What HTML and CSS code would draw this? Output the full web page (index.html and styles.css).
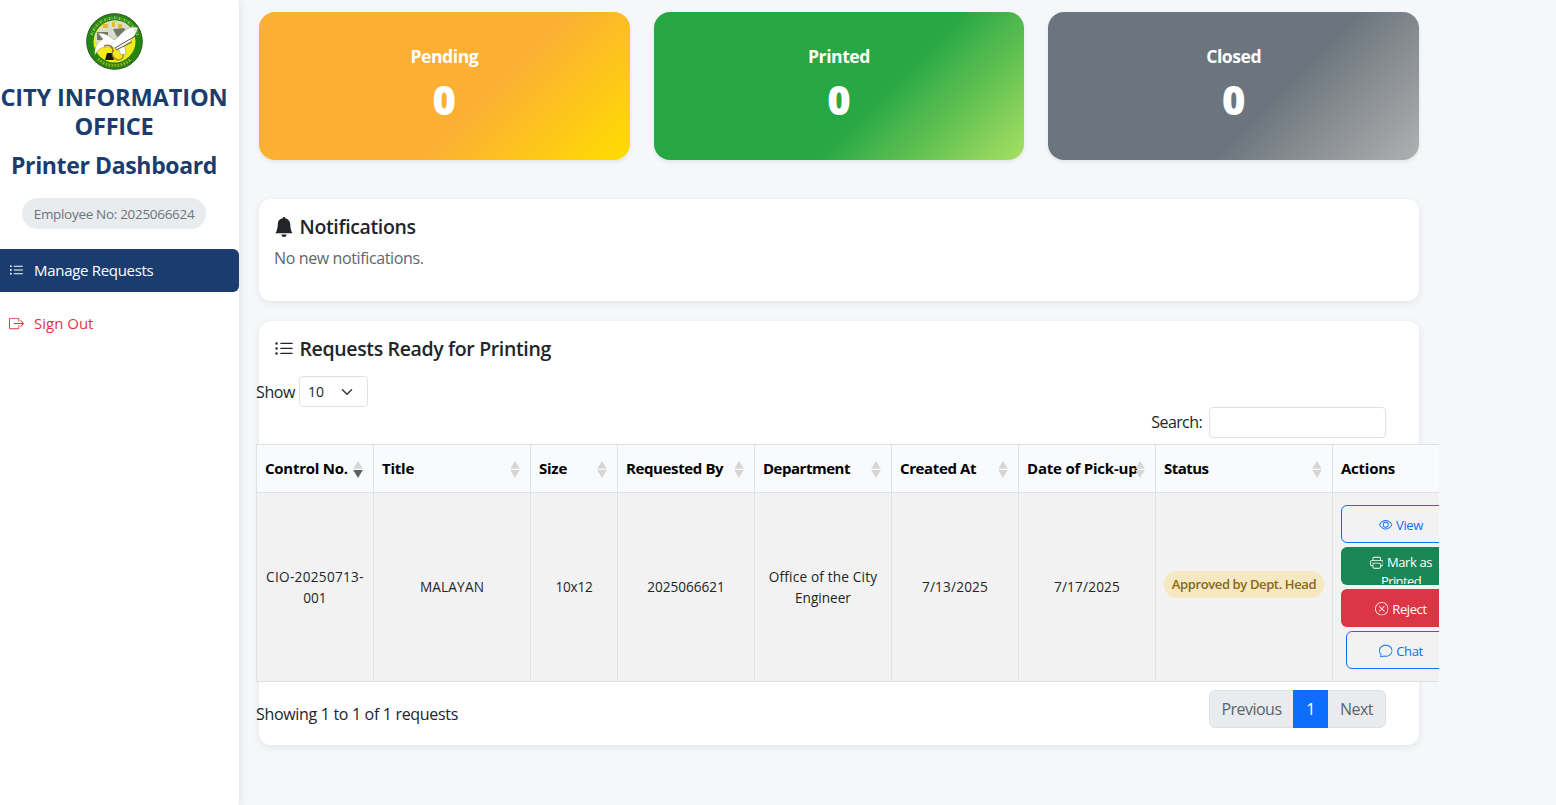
FILE: index.html
```html
<!DOCTYPE html>
<html lang="en">
<head>
<meta charset="utf-8">
<title>Printer Dashboard</title>
<link rel="stylesheet" href="styles.css">
</head>
<body>
<svg class="sprite" aria-hidden="true">
  <symbol id="list" viewBox="0 0 16 16"><path fill-rule="evenodd" d="M5 11.5a.5.5 0 0 1 .5-.5h9a.5.5 0 0 1 0 1h-9a.5.5 0 0 1-.5-.5m0-4a.5.5 0 0 1 .5-.5h9a.5.5 0 0 1 0 1h-9a.5.5 0 0 1-.5-.5m0-4a.5.5 0 0 1 .5-.5h9a.5.5 0 0 1 0 1h-9a.5.5 0 0 1-.5-.5m-3 1a1 1 0 1 0 0-2 1 1 0 0 0 0 2m0 4a1 1 0 1 0 0-2 1 1 0 0 0 0 2m0 4a1 1 0 1 0 0-2 1 1 0 0 0 0 2"/></symbol>
  <symbol id="exit" viewBox="0 0 16 16"><path fill-rule="evenodd" d="M10 12.5a.5.5 0 0 1-.5.5h-8a.5.5 0 0 1-.5-.5v-9a.5.5 0 0 1 .5-.5h8a.5.5 0 0 1 .5.5v2a.5.5 0 0 0 1 0v-2A1.5 1.5 0 0 0 9.5 2h-8A1.5 1.5 0 0 0 0 3.5v9A1.5 1.5 0 0 0 1.5 14h8a1.5 1.5 0 0 0 1.5-1.5v-2a.5.5 0 0 0-1 0z"/><path fill-rule="evenodd" d="M15.854 8.354a.5.5 0 0 0 0-.708l-3-3a.5.5 0 0 0-.708.708L14.293 7.5H5.5a.5.5 0 0 0 0 1h8.793l-2.147 2.146a.5.5 0 0 0 .708.708z"/></symbol>
  <symbol id="bell" viewBox="0 0 16 16"><path d="M8 16a2 2 0 0 0 2-2H6a2 2 0 0 0 2 2m.995-14.901a1 1 0 1 0-1.99 0A5 5 0 0 0 3 6c0 1.098-.5 6-2 7h14c-1.5-1-2-5.902-2-7 0-2.42-1.72-4.44-4.005-4.901"/></symbol>
  <symbol id="eye" viewBox="0 0 16 16"><path d="M16 8s-3-5.5-8-5.5S0 8 0 8s3 5.5 8 5.5S16 8 16 8M1.173 8a13 13 0 0 1 1.66-2.043C4.12 4.668 5.88 3.5 8 3.5s3.879 1.168 5.168 2.457A13 13 0 0 1 14.828 8q-.086.13-.195.288c-.335.48-.83 1.12-1.465 1.755C11.879 11.332 10.119 12.5 8 12.5s-3.879-1.168-5.168-2.457A13 13 0 0 1 1.172 8z"/><path d="M8 5.5a2.5 2.5 0 1 0 0 5 2.5 2.5 0 0 0 0-5M4.5 8a3.5 3.5 0 1 1 7 0 3.5 3.5 0 0 1-7 0"/></symbol>
  <symbol id="printer" viewBox="0 0 16 16"><path d="M2.5 8a.5.5 0 1 0 0-1 .5.5 0 0 0 0 1"/><path d="M5 1a2 2 0 0 0-2 2v2H2a2 2 0 0 0-2 2v3a2 2 0 0 0 2 2h1v1a2 2 0 0 0 2 2h6a2 2 0 0 0 2-2v-1h1a2 2 0 0 0 2-2V7a2 2 0 0 0-2-2h-1V3a2 2 0 0 0-2-2zM4 3a1 1 0 0 1 1-1h6a1 1 0 0 1 1 1v2H4zm1 5a2 2 0 0 0-2 2v1H2a1 1 0 0 1-1-1V7a1 1 0 0 1 1-1h12a1 1 0 0 1 1 1v3a1 1 0 0 1-1 1h-1v-1a2 2 0 0 0-2-2zm7 2v3a1 1 0 0 1-1 1H5a1 1 0 0 1-1-1v-3a1 1 0 0 1 1-1h6a1 1 0 0 1 1 1"/></symbol>
  <symbol id="reject" viewBox="0 0 16 16"><path d="M8 15A7 7 0 1 1 8 1a7 7 0 0 1 0 14m0 1A8 8 0 1 0 8 0a8 8 0 0 0 0 16"/><path d="M4.646 4.646a.5.5 0 0 1 .708 0L8 7.293l2.646-2.647a.5.5 0 0 1 .708.708L8.707 8l2.647 2.646a.5.5 0 0 1-.708.708L8 8.707l-2.646 2.647a.5.5 0 0 1-.708-.708L7.293 8 4.646 5.354a.5.5 0 0 1 0-.708"/></symbol>
  <symbol id="chat" viewBox="0 0 16 16"><path d="M2.678 11.894a1 1 0 0 1 .287.801 11 11 0 0 1-.398 2c1.395-.323 2.247-.697 2.634-.893a1 1 0 0 1 .71-.074A8 8 0 0 0 8 14c3.996 0 7-2.807 7-6s-3.004-6-7-6-7 2.808-7 6c0 1.468.617 2.83 1.678 3.894m-.493 3.905a22 22 0 0 1-.713.129c-.2.032-.352-.176-.273-.362a10 10 0 0 0 .244-.637l.003-.01c.248-.72.45-1.548.524-2.319C.743 11.37 0 9.76 0 8c0-3.866 3.582-7 8-7s8 3.134 8 7-3.582 7-8 7a9 9 0 0 1-2.347-.306c-.52.263-1.639.742-3.468 1.105"/></symbol>
  <symbol id="sort" viewBox="0 0 10 17"><path d="M5 0 9.8 7.8H.2z"/><path class="down" d="M5 17 .2 9h9.6z"/></symbol>
</svg>
<div class="app">
  <aside class="sidebar">
    <header class="brand">
      <svg class="logo" viewBox="0 0 57 57">
        <circle cx="28.5" cy="28.5" r="28" fill="#23860f"/>
        <circle cx="28.5" cy="28.5" r="27.8" fill="none" stroke="#3b5a33" stroke-width="1"/>
        <circle cx="28.5" cy="28.5" r="21" fill="#f4ea1c"/>
        <path d="M8.500 25C12 14 20 7.500 29 7.500S46 13 48.500 22L38 30H10z" fill="#d9dccf"/>
        <path d="M11 19h11v8H11zM27 16l11-1 3 5-10 4z" fill="#737a64"/>
        <path d="M17 11h5v4h-5zM26 9h3v5h-3zM32 11h4v4h-4z" fill="#e8b82a"/>
        <path d="M9 42c-1-9 3-13 8-16l-5-6c7 0 12 3 16 7 4-2 6-6 10-9 5-4 10-5 14-3-3 9-8 14-14 18 1 2 2 5 2 8l-5 1-2-5c-5-2-8-4-12-3-6 0-9 2-12 8z" fill="#fff" stroke="#8b8e82" stroke-width=".5"/>
        <path d="M51 22 29 35M46 29 30 37" stroke="#555" stroke-width="1"/>
        <path d="M21 40h5l2 7h-9z" fill="#17180c"/>
        <path d="M27 37c-2 4 0 9 5 10 4 0 6-3 5-6" fill="none" stroke="#a58a17" stroke-width="1.4"/>
        <path d="M18 33c5-2 9 0 9 6" fill="none" stroke="#9a7b25" stroke-width="1.6"/>
        <path d="M5.500 22A24 24 0 0 1 51.500 22" fill="none" stroke="#c2d77e" stroke-width="3" stroke-dasharray="1.6 1.1 .8 1.5" stroke-opacity=".7"/>
        <path d="M12 46A24 24 0 0 0 45 46" fill="none" stroke="#b8b81f" stroke-width="3" stroke-dasharray="1.8 1.2" stroke-opacity=".75"/>
      </svg>
      <h1 class="brand-name">CITY INFORMATION <span class="office">OFFICE</span></h1>
      <h2 class="brand-role">Printer Dashboard</h2>
      <p class="employee">Employee No: 2025066624</p>
    </header>
    <nav class="menu">
      <a class="link active"><svg class="ico"><use href="#list"/></svg><span class="ls-30">Manage Requests</span></a>
      <a class="link signout"><svg class="ico"><use href="#exit"/></svg><span>Sign Out</span></a>
    </nav>
  </aside>
  <main class="content">
    <section class="stats">
      <div class="stat pending"><h3 class="stat-label">Pending</h3><p class="stat-num">0</p></div>
      <div class="stat printed"><h3 class="stat-label">Printed</h3><p class="stat-num">0</p></div>
      <div class="stat closed"><h3 class="stat-label ls-30">Closed</h3><p class="stat-num">0</p></div>
    </section>
    <section class="card notices">
      <h2 class="card-title"><svg class="ico-lg"><use href="#bell"/></svg><span>Notifications</span></h2>
      <p class="muted">No new notifications.</p>
    </section>
    <section class="card requests">
      <h2 class="card-title"><svg class="ico-lg"><use href="#list"/></svg><span>Requests Ready for Printing</span></h2>
      <div class="table-area">
        <div class="length"><span class="ls-38">Show</span><div class="select"><span>10</span><svg class="chevron" viewBox="0 0 16 16"><path d="m2 5 6 6 6-6"/></svg></div></div>
        <div class="search"><span class="ls-60">Search:</span><input class="search-box" type="text"></div>
        <div class="table-clip">
          <table class="grid">
            <colgroup><col class="c1"><col class="c2"><col class="c3"><col class="c4"><col class="c5"><col class="c6"><col class="c7"><col class="c8"><col class="c9"></colgroup>
            <thead><tr>
              <th><div class="head"><span class="ls-24">Control No.</span><svg class="sort desc"><use href="#sort"/></svg></div></th>
              <th><div class="head"><span class="ls-24">Title</span><svg class="sort"><use href="#sort"/></svg></div></th>
              <th><div class="head"><span class="ls-24">Size</span><svg class="sort"><use href="#sort"/></svg></div></th>
              <th><div class="head"><span class="ls-38">Requested By</span><svg class="sort"><use href="#sort"/></svg></div></th>
              <th><div class="head"><span class="ls-48">Department</span><svg class="sort"><use href="#sort"/></svg></div></th>
              <th><div class="head"><span class="ls-38">Created At</span><svg class="sort"><use href="#sort"/></svg></div></th>
              <th><div class="head"><span class="ls-21">Date of Pick-up</span><svg class="sort"><use href="#sort"/></svg></div></th>
              <th><div class="head"><span class="ls-52">Status</span><svg class="sort"><use href="#sort"/></svg></div></th>
              <th><div class="head"><span class="ls-24">Actions</span></div></th>
            </tr></thead>
            <tbody><tr>
              <td><span class="wide-30">CIO-20250713-</span><br>001</td>
              <td class="single"><span class="wide-18">MALAYAN</span></td>
              <td class="single"><span class="ls-24">10x12</span></td>
              <td class="single">2025066621</td>
              <td><span class="wide-18">Office of the City</span><br>Engineer</td>
              <td class="single"><span class="wide-18">7/13/2025</span></td>
              <td class="single"><span class="wide-18">7/17/2025</span></td>
              <td class="status"><span class="badge">Approved by Dept. Head</span></td>
              <td><div class="actions">
                <button class="btn outline"><svg class="ico-sm"><use href="#eye"/></svg> View</button>
                <button class="btn green"><svg class="ico-sm"><use href="#printer"/></svg> Mark as<br><span class="ls-60">Printed</span></button>
                <button class="btn red"><svg class="ico-sm"><use href="#reject"/></svg> Reject</button>
                <button class="btn outline chat"><svg class="ico-sm"><use href="#chat"/></svg> Chat</button>
              </div></td>
            </tr></tbody>
          </table>
        </div>
        <div class="table-foot">
          <span class="info">Showing 1 to 1 of 1 requests</span>
          <div class="pager"><span class="page prev">Previous</span><span class="page current">1</span><span class="page next">Next</span></div>
        </div>
      </div>
    </section>
  </main>
</div>
</body>
</html>
```
FILE: styles.css
```css
* { box-sizing: border-box; }
body { margin: 0; height: 805px; overflow: hidden; background: #f5f7fb; color: #212529; font: 16px/24px "Open Sans", "Noto Sans", sans-serif; }
h1, h2, h3, p { margin: 0; }
svg { fill: currentColor; flex: none; }
.sprite { display: none; }

/* Letter-spacing steps */
.ls-21 { letter-spacing: -.21px; }
.ls-24 { letter-spacing: -.24px; }
.ls-30 { letter-spacing: -.3px; }
.ls-38 { letter-spacing: -.38px; }
.ls-48 { letter-spacing: -.48px; }
.ls-52 { letter-spacing: -.52px; }
.ls-60 { letter-spacing: -.6px; }
.wide-18 { letter-spacing: .18px; }
.wide-30 { letter-spacing: .3px; }

.app { display: flex; height: 805px; }
.sidebar { width: 239px; flex: none; background: #fff; box-shadow: 2px 0 8px rgba(0,0,0,.08); }
.brand { width: 228px; padding-top: 13px; display: flex; flex-direction: column; align-items: center; color: #1a3c6e; text-align: center; }
.logo { width: 57px; height: 57px; margin-bottom: 13px; }
.brand-name { width: 228px; font-size: 23.6px; line-height: 29px; font-weight: 700; letter-spacing: -.16px; }
.office { letter-spacing: -.3px; }
.brand-role { margin: 10px 0 18px; font-size: 23px; line-height: 29px; font-weight: 700; letter-spacing: -.36px; white-space: nowrap; }
.employee { height: 31px; padding: 0 12px; border-radius: 16px; background: #e9ecef; color: #6c757d; font-size: 13.5px; line-height: 32px; letter-spacing: -.31px; white-space: nowrap; }
.menu { margin-top: 20px; display: flex; flex-direction: column; gap: 10px; }
.link { height: 43px; padding: 0 0 1px 9px; display: flex; align-items: center; gap: 10px; font-size: 15px; white-space: nowrap; }
.ico { width: 15px; height: 15px; }
.active { background: #1a3c6e; color: #fff; border-radius: 0 6px 6px 0; }
.signout { color: #dc3545; }

.content { flex: none; width: 1200px; padding: 12px 20px; }
.stats { display: grid; grid-template-columns: repeat(3, 1fr); gap: 24px; margin-bottom: 39px; }
.stat { height: 148px; border-radius: 16px; padding-top: 33px; color: #fff; text-align: center; box-shadow: 0 2px 4px rgba(0,0,0,.08); }
.pending { background: linear-gradient(135deg, #fbb034 60%, #ffdd00 100%); }
.printed { background: linear-gradient(135deg, #28a745 60%, #a8e063 100%); }
.closed { background: linear-gradient(135deg, #6c757d 60%, #b0b0b0 100%); }
.stat-label { font-size: 17.6px; line-height: 22px; font-weight: 700; letter-spacing: -.46px; }
.stat-num { font-size: 40px; line-height: 48px; font-weight: 800; margin-top: 9px; }

.card { width: 1160px; background: #fff; border-radius: 12px; padding: 16px 0 0; box-shadow: 0 2px 8px rgba(0,0,0,.08); }
.notices { height: 102px; margin-bottom: 20px; }
.requests { height: 424px; }
.card-title { display: flex; align-items: center; gap: 5.5px; padding-left: 15px; font-size: 19.5px; line-height: 24px; font-weight: 600; letter-spacing: -.35px; }
.ico-lg { width: 20px; height: 20px; }
.muted { margin-top: 7px; padding-left: 15px; color: #5f666d; letter-spacing: -.37px; }

.table-area { margin: 15px 0 0 -3px; width: 1183px; }
.length { display: flex; align-items: center; gap: 4px; height: 31px; }
.select { width: 69px; height: 31px; border: 1px solid #dee2e6; border-radius: 4px; display: flex; align-items: center; padding: 0 14px 0 8px; justify-content: space-between; font-size: 14px; }
.chevron { width: 12px; height: 12px; fill: none; stroke: #343a40; stroke-width: 2; stroke-linecap: round; stroke-linejoin: round; }
.search { display: flex; align-items: center; justify-content: flex-end; gap: 7px; height: 31px; padding-right: 53px; }
.search-box { width: 177px; height: 31px; border: 1px solid #dee2e6; border-radius: 4px; background: #fff; }
.search span { padding-bottom: 1px; }

.table-clip { margin-top: 6px; overflow: hidden; }
.grid { table-layout: fixed; width: 1213px; border-collapse: collapse; font-size: 13.6px; line-height: 21px; background: #f2f2f2; }
.c1 { width: 117px; } .c2 { width: 157px; } .c3 { width: 87px; } .c4 { width: 137px; } .c5 { width: 137px; }
.c6 { width: 127px; } .c7 { width: 137px; } .c8 { width: 177px; } .c9 { width: 137px; }
.grid th, .grid td { border: 1px solid #dee2e6; padding: 0 8px; white-space: nowrap; }
.grid th { height: 48px; background: #f8fafc; color: #000; font-size: 15px; font-weight: 700; }
.grid td { height: 189px; text-align: center; vertical-align: middle; padding: 0; }
.grid td.single { padding-bottom: 2px; }
.grid td.status { padding-bottom: 5px; }
.head { display: flex; align-items: center; justify-content: space-between; }
.sort { width: 10px; height: 17px; margin: 1px 2px 0 -10px; fill: #d6d6d6; }
.down { fill: var(--down, #d6d6d6); }
.desc { --down: #5f6163; }
.badge { display: inline-block; height: 27px; line-height: 27px; border-radius: 13px; padding: 0 8px; background: #f5e8c3; color: #8a6914; font-size: 13px; font-weight: 600; letter-spacing: -.38px; vertical-align: 2px; }

.actions { display: flex; flex-direction: column; gap: 4px; padding-left: 8px; }
.btn { width: 120px; height: 38px; border: 1px solid transparent; border-radius: 6px; padding: 2px 0 0; overflow: hidden; font: 13px/19px "Open Sans", "Noto Sans", sans-serif; letter-spacing: -.4px; color: #fff; }
.outline { background: transparent; border-color: #0d6efd; color: #0d6efd; }
.green { background: #198754; padding-top: 5px; }
.red { background: #dc3545; }
.chat { width: 110px; margin-left: 5px; }
.ico-sm { width: 13.5px; height: 13.5px; vertical-align: -2px; margin-right: .5px; }

.table-foot { display: flex; justify-content: space-between; padding: 8px 53px 0 0; }
.info { padding-top: 12px; letter-spacing: -.32px; }
.pager { display: flex; height: 38px; line-height: 36px; border: 1px solid #dee2e6; border-radius: 6px; background: #e9ecef; color: #5c636a; }
.page { text-align: center; letter-spacing: -.53px; }
.prev { width: 83px; }
.next { width: 57px; }
.current { width: 35px; margin: -1px 0; line-height: 38px; background: #0d6efd; color: #fff; }
```
